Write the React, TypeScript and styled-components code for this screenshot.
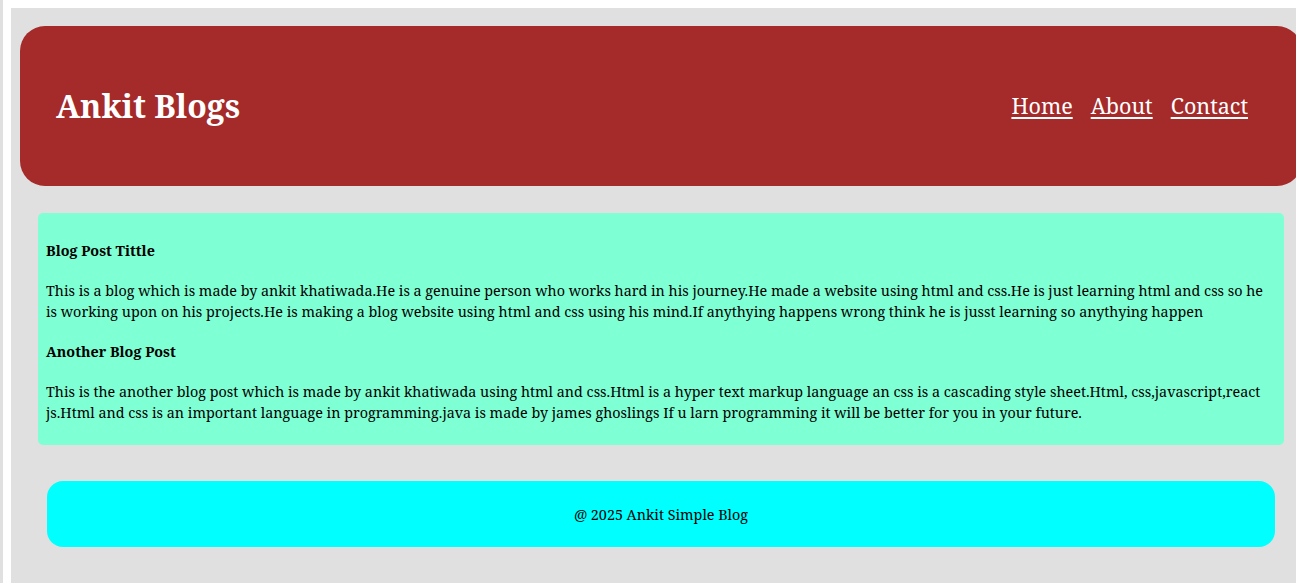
import React from "react";
import styled, { createGlobalStyle } from "styled-components";

const Global = createGlobalStyle`
  html { background: #ffffff; overflow: hidden; }
  body {
    margin: 0;
    padding: 8px 0 0 8px;
    border-left: 3px solid #e0e0e0;
    font-family: "Noto Serif", serif;
    font-size: 14.33px;
    color: #000;
  }
`;

const Page = styled.div`
  width: 1300px;
  height: 575px;
  box-sizing: border-box;
  background: #e0e0e0;
  display: flex;
  flex-direction: column;
  align-items: center;
  padding-top: 18px;
`;

const Header = styled.header`
  flex-shrink: 0;
  width: 1282px;
  height: 160px;
  box-sizing: border-box;
  background: #a52a2a;
  border-radius: 25px;
  display: flex;
  align-items: center;
  justify-content: space-between;
  padding: 0 54px 2px 36px;
  color: #fff;
`;

const Title = styled.h1`
  margin: 0;
  font-size: 32px;
  font-weight: 700;
`;

const Nav = styled.nav`
  display: flex;
  gap: 18px;
`;

const NavLink = styled.a`
  color: #fff;
  font-size: 21.5px;
  text-decoration: underline;
  text-underline-offset: 3px;
`;

const Content = styled.main`
  flex-shrink: 0;
  margin-top: 27px;
  width: 1246px;
  box-sizing: border-box;
  background: #7fffd4;
  border-radius: 5px;
  padding: 27px 8px 3px;
  display: flex;
  flex-direction: column;
`;

const PostTitle = styled.h4`
  margin: 0 0 19px;
  font-size: 14.33px;
  line-height: 21px;
  font-weight: 700;
`;

const PostText = styled.p`
  margin: 0 0 19px;
  line-height: 21px;
`;

const Footer = styled.footer`
  flex-shrink: 0;
  margin-top: 36px;
  width: 1228px;
  height: 66px;
  background: #00ffff;
  border-radius: 16px;
  display: flex;
  align-items: center;
  justify-content: center;
`;

export default function App() {
  return (
    <>
      <Global />
      <Page>
        <Header>
          <Title>Ankit Blogs</Title>
          <Nav>
            <NavLink href="#">Home</NavLink>
            <NavLink href="#">About</NavLink>
            <NavLink href="#">Contact</NavLink>
          </Nav>
        </Header>
        <Content>
          <PostTitle>Blog Post Tittle</PostTitle>
          <PostText>
            This is a blog which is made by ankit khatiwada.He is a genuine person who works hard in his journey.He made a website using html and css.He is just learning html and css so he is working upon on his projects.He is making a blog website using html and css using his mind.If anythying happens wrong think he is jusst learning so anythying happen
          </PostText>
          <PostTitle>Another Blog Post</PostTitle>
          <PostText>
            This is the another blog post which is made by ankit khatiwada using html and css.Html is a hyper text markup language an css is a cascading style sheet.Html, css,javascript,react js.Html and css is an important language in programming.java is made by james ghoslings If u larn programming it will be better for you in your future.
          </PostText>
        </Content>
        <Footer>@ 2025 Ankit Simple Blog</Footer>
      </Page>
    </>
  );
}
